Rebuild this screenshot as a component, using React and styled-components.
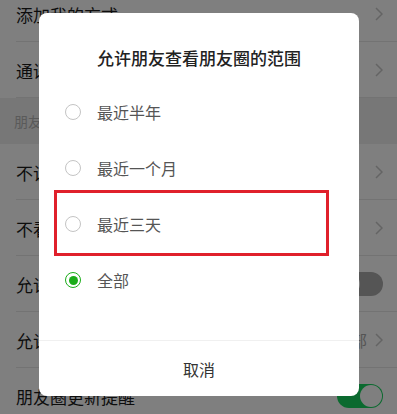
import React from 'react'
import styled, { createGlobalStyle } from 'styled-components'

const GlobalStyle = createGlobalStyle`
    html, body {
        margin: 0;
        padding: 0;
        width: 397px;
        height: 414px;
        overflow: hidden;
        background: #ffffff;
        font-family: "Noto Sans CJK SC", "Noto Sans", sans-serif;
    }
`

const settings = [
    { label: '添加我的方式', type: 'arrow' },
    { label: '通讯录黑名单', type: 'arrow' },
    { label: '朋友圈', type: 'header' },
    { label: '不让他（她）看', type: 'arrow' },
    { label: '不看他（她）', type: 'arrow' },
    { label: '允许陌生人查看十条朋友圈', type: 'switch', on: false },
    { label: '允许朋友查看朋友圈的范围', type: 'arrow', value: '全部' },
    { label: '朋友圈更新提醒', type: 'switch', on: true },
]

const options = [
    { label: '最近半年' },
    { label: '最近一个月' },
    { label: '最近三天', highlighted: true },
    { label: '全部', checked: true },
]

const Chevron = () => (
    <svg width="8" height="14" viewBox="0 0 8 14">
        <path d="M1 1 L7 7 L1 13" fill="none" stroke="#c8c8c8" strokeWidth="1.5" />
    </svg>
)

const App = () => {
    return (
        <Page>
            <GlobalStyle />
            <List>
                {settings.map((item) =>
                    item.type === 'header' ? (
                        <SectionHeader key={item.label}>{item.label}</SectionHeader>
                    ) : (
                        <Row key={item.label}>
                            <RowLabel>{item.label}</RowLabel>
                            <RowRight>
                                {item.value && <RowValue>{item.value}</RowValue>}
                                {item.type === 'arrow' && <Chevron />}
                                {item.type === 'switch' && (
                                    <Switch $on={item.on}>
                                        <Knob $on={item.on} />
                                    </Switch>
                                )}
                            </RowRight>
                        </Row>
                    )
                )}
            </List>
            <Overlay>
                <Dialog>
                    <Title>允许朋友查看朋友圈的范围</Title>
                    <Options>
                        {options.map((opt) => (
                            <Option key={opt.label}>
                                <Radio $checked={opt.checked} />
                                <OptionLabel>{opt.label}</OptionLabel>
                                {opt.highlighted && <Highlight />}
                            </Option>
                        ))}
                    </Options>
                    <Footer>取消</Footer>
                </Dialog>
            </Overlay>
        </Page>
    )
}

const Page = styled.div`
    position: relative;
    width: 397px;
    height: 414px;
    overflow: hidden;
    background: #ffffff;
`
const List = styled.div`
    display: flex;
    flex-direction: column;
    margin-top: -14px;
`
const Row = styled.div`
    display: flex;
    align-items: center;
    justify-content: space-between;
    height: 56px;
    padding: 0 14px 0 16px;
    background: #ffffff;
    position: relative;
    &::after {
        content: '';
        position: absolute;
        left: 16px;
        right: 0;
        bottom: 0;
        height: 1px;
        background: #e6e6e6;
    }
`
const RowLabel = styled.span`
    font-size: 17px;
    color: #1a1a1a;
`
const RowRight = styled.div`
    display: flex;
    align-items: center;
    gap: 8px;
`
const RowValue = styled.span`
    font-size: 16px;
    color: #a8a8a8;
`
const SectionHeader = styled.div`
    display: flex;
    align-items: center;
    height: 46px;
    padding: 0 14px;
    background: #eeeeee;
    font-size: 14px;
    color: #b4b4b4;
`
const Switch = styled.div`
    position: relative;
    width: 46px;
    height: 24px;
    border-radius: 12px;
    background: ${({ $on }) => ($on ? '#16d45e' : '#aaaaaa')};
`
const Knob = styled.div`
    position: absolute;
    top: 1px;
    ${({ $on }) => ($on ? 'right: 1px;' : 'left: 1px;')}
    width: 22px;
    height: 22px;
    border-radius: 50%;
    background: #ffffff;
`
const Overlay = styled.div`
    position: absolute;
    inset: 0;
    background: rgba(0, 0, 0, 0.5);
`
const Dialog = styled.div`
    position: absolute;
    left: 39px;
    top: 13px;
    width: 320px;
    height: 383px;
    background: #ffffff;
    border-radius: 8px;
    display: flex;
    flex-direction: column;
`
const Title = styled.div`
    padding: 34px 0 15px;
    line-height: 22px;
    text-align: center;
    font-size: 17px;
    font-weight: 500;
    color: #222222;
`
const Options = styled.div`
    display: flex;
    flex-direction: column;
    flex: 1;
`
const Option = styled.div`
    position: relative;
    display: flex;
    align-items: center;
    height: 56px;
    padding-left: 26px;
    gap: 16px;
`
const Radio = styled.span`
    box-sizing: border-box;
    width: 16px;
    height: 16px;
    border-radius: 50%;
    border: 1.5px solid ${({ $checked }) => ($checked ? '#1aad19' : '#c4c4c4')};
    display: flex;
    align-items: center;
    justify-content: center;
    &::after {
        content: '';
        display: ${({ $checked }) => ($checked ? 'block' : 'none')};
        width: 9px;
        height: 9px;
        border-radius: 50%;
        background: #1aad19;
    }
`
const OptionLabel = styled.span`
    font-size: 16px;
    color: #555555;
`
const Highlight = styled.div`
    position: absolute;
    left: 15px;
    right: 30px;
    top: -6px;
    height: 66px;
    box-sizing: border-box;
    border: 3px solid #e0202b;
`
const Footer = styled.div`
    height: 55px;
    border-top: 1px solid #f0f0f0;
    display: flex;
    align-items: center;
    justify-content: center;
    font-size: 16px;
    color: #333333;
`

export default App
